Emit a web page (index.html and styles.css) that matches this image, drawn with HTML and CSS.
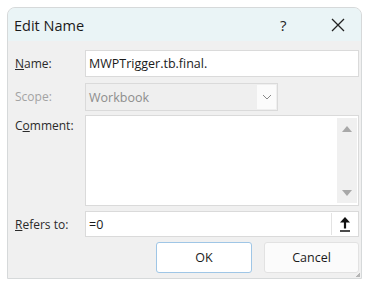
FILE: index.html
```html
<!DOCTYPE html>
<html>
<head>
<meta charset="utf-8">
<link rel="stylesheet" href="styles.css">
</head>
<body>
<div class="dialog">
  <div class="titlebar">
    <span class="title">Edit Name</span>
    <span class="help">?</span>
    <span class="close">
      <svg width="14" height="14" viewBox="0 0 14 14"><path d="M1 1 L13 13 M13 1 L1 13" stroke="#222" stroke-width="1.3" fill="none"/></svg>
    </span>
  </div>
  <div class="content">
    <div class="row r-name">
      <label class="lbl"><u>N</u>ame:</label>
      <div class="field input">MWPTrigger.tb.final.</div>
    </div>
    <div class="row r-scope">
      <label class="lbl disabled">Scope:</label>
      <div class="field select">
        <span class="sel-text">Workbook</span>
        <span class="sel-btn">
          <svg width="10" height="6" viewBox="0 0 10 6"><path d="M1 1 L5 5 L9 1" stroke="#888" stroke-width="1" fill="none"/></svg>
        </span>
      </div>
    </div>
    <div class="row r-comment">
      <label class="lbl">C<u>o</u>mment:</label>
      <div class="field textarea">
        <div class="scrollbar">
          <svg width="10" height="6" viewBox="0 0 10 6"><path d="M5 0 L10 6 L0 6 Z" fill="#a8a8a8"/></svg>
          <svg width="10" height="6" viewBox="0 0 10 6"><path d="M0 0 L10 0 L5 6 Z" fill="#a8a8a8"/></svg>
        </div>
      </div>
    </div>
    <div class="row r-refers">
      <label class="lbl"><u>R</u>efers to:</label>
      <div class="field input refers">
        <span class="ref-text">=0</span>
        <span class="ref-btn">
          <svg width="12" height="16" viewBox="0 0 12 16"><path d="M6 5 L6 12.5" stroke="#111" stroke-width="2.2" fill="none"/><path d="M6 1 L11 6.5 L1 6.5 Z" fill="#111"/><path d="M1 15 L11 15" stroke="#111" stroke-width="1.4"/></svg>
        </span>
      </div>
    </div>
    <div class="buttons">
      <button class="btn ok">OK</button>
      <button class="btn cancel">Cancel</button>
    </div>
  </div>
  <span class="grip"></span>
</div>
</body>
</html>
```
FILE: styles.css
```css
html, body {
  margin: 0;
  padding: 0;
  background: #ffffff;
}
body {
  font-family: "Open Sans", "Noto Sans", sans-serif;
  color: #1b1b1b;
}
.dialog {
  position: relative;
  margin: 7px 0 0 7px;
  width: 355px;
  height: 272px;
  box-sizing: border-box;
  border: 1px solid #d6d9da;
  border-radius: 8px 8px 0 0;
  background: #f0f0f0;
  display: flex;
  flex-direction: column;
  overflow: hidden;
}
.titlebar {
  height: 33px;
  background: #eaf4f6;
  display: flex;
  align-items: center;
  padding-left: 6px;
  flex-shrink: 0;
}
.title {
  font-size: 14.5px;
  color: #1a1a1a;
  flex: 1;
  padding-top: 1px;
}
.help {
  font-size: 15px;
  width: 10px;
  margin-right: 41px;
  color: #222;
}
.close {
  width: 14px;
  height: 14px;
  margin-right: 16px;
  display: flex;
}
.content {
  flex: 1;
  padding: 9px 2px 0 7px;
  display: flex;
  flex-direction: column;
}
.row {
  display: flex;
  align-items: flex-start;
}
.lbl {
  width: 70px;
  flex-shrink: 0;
  font-size: 12px;
  color: #2a2a2a;
  padding-top: 5px;
}
.lbl.disabled {
  color: #a3a3a3;
}
.field {
  flex: 1;
  box-sizing: border-box;
  border: 1px solid #dadada;
  background: #ffffff;
  font-size: 12.5px;
}
.input {
  height: 27px;
  padding: 4px 0 0 3px;
  color: #1a1a1a;
}
.r-scope {
  margin-top: 6px;
}
.select {
  flex: 0 0 193px;
  height: 28px;
  background: #efefef;
  display: flex;
  align-items: stretch;
  padding: 1px 1px 1px 3px;
}
.sel-text {
  flex: 1;
  color: #8d8d8d;
  padding-top: 4px;
}
.sel-btn {
  width: 19px;
  background: #fbfbfb;
  display: flex;
  align-items: center;
  justify-content: center;
}
.r-comment {
  margin-top: 4px;
}
.r-comment .lbl {
  padding-top: 2px;
}
.textarea {
  height: 91px;
  display: flex;
  justify-content: flex-end;
  padding: 2px 1px 2px 0;
}
.scrollbar {
  width: 20px;
  background: #f0f0f0;
  display: flex;
  flex-direction: column;
  align-items: center;
  justify-content: space-between;
  padding: 8px 0 7px;
}
.r-refers {
  margin-top: 5px;
}
.refers {
  height: 26px;
  display: flex;
  padding: 0 0 0 3px;
}
.ref-text {
  flex: 1;
  padding-top: 4px;
}
.ref-btn {
  width: 25px;
  margin: 1px 1px 1px 0;
  border-left: 1px solid #e3e3e3;
  background: #ffffff;
  display: flex;
  align-items: center;
  justify-content: center;
}
.buttons {
  margin-top: 5px;
  display: flex;
  justify-content: flex-end;
  gap: 12px;
}
.btn {
  width: 96px;
  height: 31px;
  box-sizing: border-box;
  font-family: "Open Sans", "Noto Sans", sans-serif;
  font-size: 12.5px;
  color: #1a1a1a;
  border-radius: 3px;
  padding: 0;
}
.ok {
  background: #ffffff;
  border: 1px solid #9fc6e6;
}
.cancel {
  width: 95px;
  background: #fbfbfb;
  border: 1px solid #e2e2e2;
}
.grip {
  position: absolute;
  right: 1px;
  bottom: 1px;
  width: 4px;
  height: 4px;
  background: linear-gradient(135deg, transparent 50%, #b5b5b5 50%);
}
```
